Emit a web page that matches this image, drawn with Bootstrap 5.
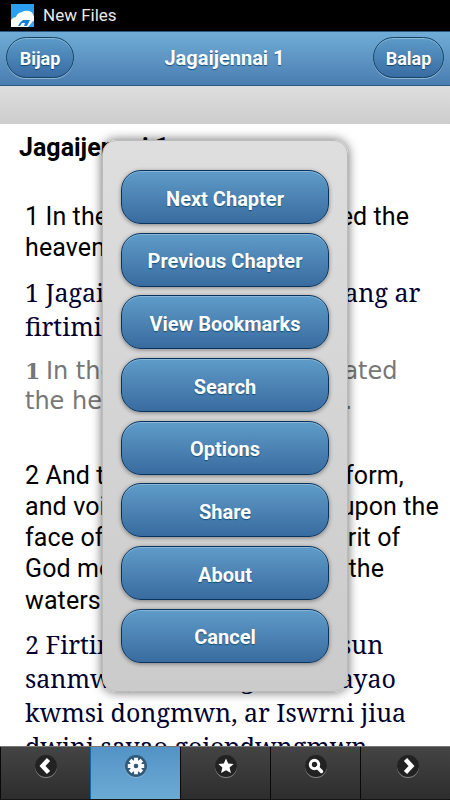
<!DOCTYPE html>
<html lang="en">
<head>
<meta charset="utf-8">
<meta name="viewport" content="width=device-width, initial-scale=1">
<title>Jagaijennai 1</title>
<link href="https://cdn.jsdelivr.net/npm/bootstrap@5.3.0/dist/css/bootstrap.min.css" rel="stylesheet">
<style>
body{width:450px;height:800px;font-family:Roboto,"Liberation Sans",sans-serif;color:#000;background:#fff}
.status{height:31px;background:#000;color:#e9e9e9;font-size:17px;padding-left:11px;gap:9px}
.status svg{width:23px;height:23px;margin-top:-1px}
.topbar{height:55px;background:linear-gradient(#70add6,#4a7db1);border-top:1px solid #2e5780;border-bottom:1px solid #2b587f;padding:0 6px 1px;color:#fff;font-weight:700;text-shadow:0 1px 1px #194b7e}
.topbar h1{font-size:20px;font-weight:700;padding-left:2px}
.pill{height:41px;margin-bottom:2px;border-radius:21px;border:1px solid #124464;background:linear-gradient(#5c9bc9,#396ca3);color:#fff;font-weight:700;font-size:18px;line-height:1;box-shadow:0 1px 0 #ffffff66,inset 0 1px 0 #ffffff50;text-shadow:0 1px 1px #124464;padding:3px 0 0}
.pill-l{width:68px}.pill-r{width:71px}
.subbar{height:38px;background:linear-gradient(#dedede,#cdcdcd)}
.reader{height:622px;white-space:nowrap}
.reader h2{font-size:25px;font-weight:700;line-height:30px;margin:9px 0 38px 19px}
.verse{margin-left:25px}
.verse-a{font-size:25px;line-height:31.3px;letter-spacing:.11px}
.verse-b{font-family:"Noto Serif","DejaVu Serif",serif;font-size:25px;line-height:34px;color:#00002f;margin-top:11px}
.verse-c{font-family:"DejaVu Sans",sans-serif;font-size:24px;line-height:30px;color:#777;margin-top:13px}
.verse-c b{font-family:"DejaVu Serif",serif;font-size:22px;margin-right:-2px}
.verse-gap{margin-top:44px}
.popup{z-index:10;left:102px;top:140px;width:246px;height:552px;border-radius:14px;border:1px solid #bbb;background:linear-gradient(#dedede,#cbcbcb);box-shadow:0 0 11px #00000099;padding:29px 18px 0;gap:8.7px}
.choice{height:54px;flex:none;border-radius:20px;border:1px solid #06345f;background:linear-gradient(#5f9cc9,#396b9f);box-shadow:0 1px 4px #00000066,inset 0 1px 0 #ffffff45;color:#fff;font-weight:700;font-size:20px;line-height:1;text-shadow:0 1px 1px #145072;padding:3px 0 0}
.tabs{height:54px;background:linear-gradient(#444,#2d2d2d);border-top:1px solid #777;border-bottom:1px solid #151515}
.tab{border-left:1px solid #090909;padding-top:7px}
.tab:last-child svg{margin-left:4px}
.tab.active{background:linear-gradient(#5393c5,#6caad5);border-color:#0d6a9e}
.tab svg{width:24px;height:25px}
</style>
<script src="https://cdn.jsdelivr.net/npm/bootstrap@5.3.0/dist/js/bootstrap.bundle.min.js"></script>
</head>
<body class="position-relative overflow-hidden d-flex flex-column">
<div class="status d-flex align-items-center">
<svg viewBox="0 0 23 23"><path fill="#2ba0f2" d="M0 0h23v23H0z"/><path fill="#fff" d="M0 23v-7q2-3 5-3 1-4 6-5 3-2 7-1 4 1 4 4l1 1v11z"/><path fill="#147fd8" d="M12 16h7l-3 6h-3l1-3h-3l-2 3H7q2-4 5-6z"/><path fill="#3aa4ee" d="M17 23l5-6h1v6z"/></svg>
<span>New Files</span>
</div>
<header class="topbar d-flex align-items-center justify-content-between">
<button class="btn pill pill-l">Bijap</button><h1 class="m-0">Jagaijennai 1</h1><button class="btn pill pill-r">Balap</button>
</header>
<div class="subbar"></div>
<main class="reader overflow-hidden">
<h2>Jagaijennai 1</h2>
<div class="verse verse-a"><div>1 In the beginning God created the</div><div>heavens and the earth.</div></div>
<div class="verse verse-b"><div>1 Jagaijennaiao Iswra okhrang ar</div><div>firtimikhou sorjidwng.</div></div>
<div class="verse verse-c"><div><b>1</b> In the beginning God created</div><div>the heavens and the earth.</div></div>
<div class="verse verse-a verse-gap"><div>2 And the earth was without form,</div><div>and void; and darkness was upon the</div><div>face of the deep. And the Spirit of</div><div>God moved upon the face of the</div><div>waters.</div></div>
<div class="verse verse-b"><div>2 Firtimia dathait gwiyi gosun</div><div>sanmwn, arw thwgwnan sayao</div><div>kwmsi dongmwn, ar Iswrni jiua</div><div>dwini sayao gojopdwngmwn.</div></div>
</main>
<nav class="tabs d-flex">
<div class="tab col d-flex justify-content-center align-items-start"><svg viewBox="0 0 24 25"><circle cx="12" cy="13" r="11" fill="#888"/><circle cx="12" cy="12" r="11" fill="#222"/><path d="M14.500 5.500L8.500 12l6 6.500" fill="none" stroke="#fff" stroke-width="4.400"/></svg></div>
<div class="tab active col d-flex justify-content-center align-items-start"><svg viewBox="0 0 24 25"><circle cx="12" cy="13" r="11" fill="#86b8da"/><circle cx="12" cy="12" r="11" fill="#315978"/><path d="M12 3.800v16.400M3.800 12h16.400M6.200 6.200l11.600 11.600M17.800 6.200L6.200 17.800" stroke="#fff" stroke-width="3.800"/><circle cx="12" cy="12" r="6" fill="#fff"/><circle cx="12" cy="12" r="2.300" fill="#315978"/></svg></div>
<div class="tab col d-flex justify-content-center align-items-start"><svg viewBox="0 0 24 25"><circle cx="12" cy="13" r="11" fill="#888"/><circle cx="12" cy="12" r="11" fill="#222"/><path d="M12 4.500l2.200 4.900 5.500.5-4.100 3.600 1.300 5.500L12 16.200 7.100 19l1.300-5.500-4.100-3.600 5.500-.5z" fill="#fff"/></svg></div>
<div class="tab col d-flex justify-content-center align-items-start"><svg viewBox="0 0 24 25"><circle cx="12" cy="13" r="11" fill="#888"/><circle cx="12" cy="12" r="11" fill="#222"/><circle cx="10.500" cy="10.500" r="4.200" fill="none" stroke="#fff" stroke-width="3"/><path d="M13.500 13.500l4 4" stroke="#fff" stroke-width="3.500" stroke-linecap="round"/></svg></div>
<div class="tab col d-flex justify-content-center align-items-start"><svg viewBox="0 0 24 25"><circle cx="12" cy="13" r="11" fill="#888"/><circle cx="12" cy="12" r="11" fill="#222"/><path d="M9.500 5.500l6 6.500-6 6.500" fill="none" stroke="#fff" stroke-width="4.400"/></svg></div>
</nav>
<div class="popup position-absolute d-flex flex-column">
<button class="btn choice">Next Chapter</button>
<button class="btn choice">Previous Chapter</button>
<button class="btn choice">View Bookmarks</button>
<button class="btn choice">Search</button>
<button class="btn choice">Options</button>
<button class="btn choice">Share</button>
<button class="btn choice">About</button>
<button class="btn choice">Cancel</button>
</div>
</body>
</html>
